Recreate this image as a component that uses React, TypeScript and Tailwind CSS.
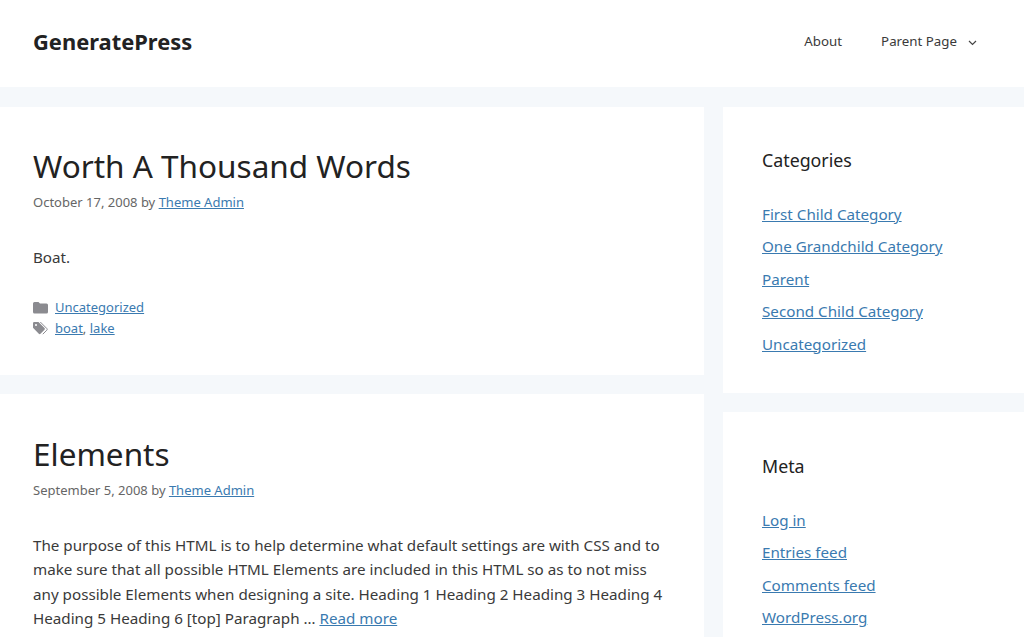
const font = "font-['Noto_Sans','Open_Sans',sans-serif]";
const link = "text-[#3a7ab0] underline";

function Folder() {
  return (
    <svg width="15" height="13" viewBox="0 0 15 13" className="shrink-0 w-[15px] h-[13px]">
      <path d="M1.500 1h4l1.500 1.500h6.500A1.500 1.500 0 0 1 15 4v7a1.500 1.500 0 0 1-1.500 1.500h-12A1.500 1.500 0 0 1 0 11V2.500A1.500 1.500 0 0 1 1.500 1z" fill="#8b8b90" />
    </svg>
  );
}

function Tag() {
  return (
    <svg width="15" height="13" viewBox="0 0 15 13" className="shrink-0 w-[15px] h-[13px]">
      <path d="M0 1.200A1.200 1.200 0 0 1 1.200 0h4.300l6 6a1.200 1.200 0 0 1 0 1.700l-4 4a1.200 1.200 0 0 1-1.700 0l-5.800-6z" fill="#8b8b90" />
      <path d="M7.300 0l6.500 6.500a1.200 1.200 0 0 1 0 1.700l-4 4" fill="none" stroke="#8b8b90" strokeWidth="1" />
      <circle cx="3" cy="3" r="1" fill="#fff" />
    </svg>
  );
}

function Widget({ title, items, className }: { title: string; items: string[]; className: string }) {
  return (
    <section className={`bg-white pl-[39px] ${className}`}>
      <h2 className="text-[17.800px] leading-[26px] text-[#222]">{title}</h2>
      <ul className="mt-[30px] flex flex-col gap-[10.400px]">
        {items.map((t) => (
          <li key={t} className="text-[15.200px] leading-[22px]">
            <a className={link}>{t}</a>
          </li>
        ))}
      </ul>
    </section>
  );
}

export default function App() {
  return (
    <div className={`h-[637px] overflow-hidden bg-[#f5f8fb] ${font}`}>
      <header className="h-[87px] bg-white flex items-center justify-between pl-[33px] pr-[47px]">
        <div className="text-[21.900px] font-bold leading-none text-[#222] pb-[3px]">GeneratePress</div>
        <nav className="flex items-center text-[13.300px] text-[#3a3a3a] pb-[3px]">
          <a>About</a>
          <a className="ml-[39px]">Parent Page</a>
          <svg width="9" height="6" viewBox="0 0 9 6" className="ml-[11px] mt-[1px]">
            <path d="M1 1l3.500 3.500L8 1" fill="none" stroke="#444" strokeWidth="1.200" />
          </svg>
        </nav>
      </header>
      <div className="mt-[20px] flex gap-[19px]">
        <main className="w-[704px] flex flex-col gap-[19px]">
          <article className="h-[268px] bg-white pl-[33px] pt-[36px]">
            <h1 className="text-[31.500px] leading-[46px] text-[#222]">Worth A Thousand Words</h1>
            <div className="text-[13px] leading-[20px] text-[#666] mt-[3px]">
              October 17, 2008 by <a className={link}>Theme Admin</a>
            </div>
            <p className="mt-[33px] text-[15.200px] leading-[24px] text-[#3a3a3a]">Boat.</p>
            <div className="mt-[28px] flex items-center gap-[7px] text-[13px] leading-[20px]">
              <Folder />
              <a className={link}>Uncategorized</a>
            </div>
            <div className="mt-[1px] flex items-center gap-[7px] text-[13px] leading-[20px] text-[#666]">
              <Tag />
              <span>
                <a className={link}>boat</a>, <a className={link}>lake</a>
              </span>
            </div>
          </article>
          <article className="h-[260px] bg-white pl-[33px] pt-[37px]">
            <h1 className="text-[31.500px] leading-[46px] text-[#222]">Elements</h1>
            <div className="text-[13px] leading-[20px] text-[#666] mt-[3px]">
              September 5, 2008 by <a className={link}>Theme Admin</a>
            </div>
            <p className="mt-[33px] w-[640px] text-[15.200px] leading-[24.300px] text-[#3a3a3a]">
              The purpose of this HTML is to help determine what default settings are with CSS and to make sure that
              all possible HTML Elements are included in this HTML so as to not miss any possible Elements when
              designing a site. Heading 1 Heading 2 Heading 3 Heading 4 Heading 5 Heading 6 [top] Paragraph …{" "}
              <a className={link}>Read more</a>
            </p>
          </article>
        </main>
        <aside className="w-[301px] flex flex-col gap-[19px]">
          <Widget
            title="Categories"
            items={["First Child Category", "One Grandchild Category", "Parent", "Second Child Category", "Uncategorized"]}
            className="h-[286px] pt-[40px]"
          />
          <Widget
            title="Meta"
            items={["Log in", "Entries feed", "Comments feed", "WordPress.org"]}
            className="h-[260px] pt-[41px]"
          />
        </aside>
      </div>
    </div>
  );
}
